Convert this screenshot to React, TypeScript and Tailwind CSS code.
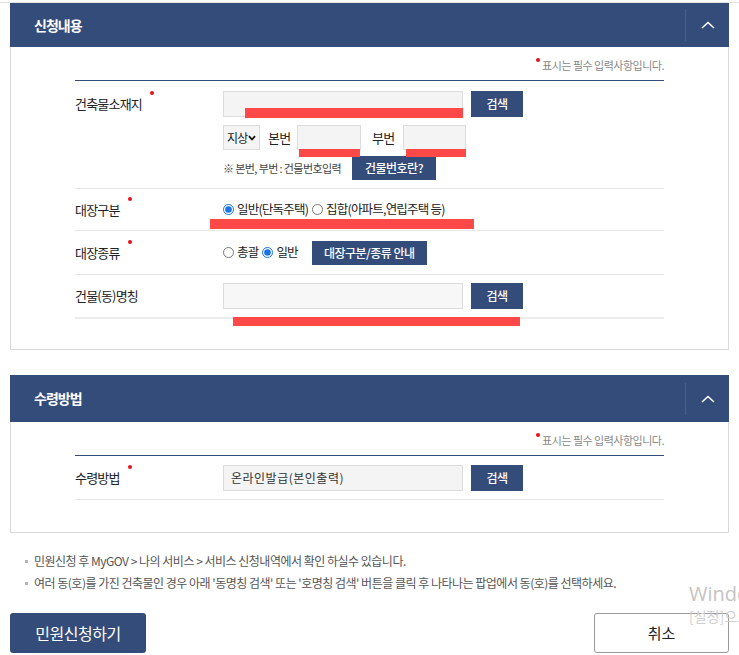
import { ReactNode } from 'react'

const NAVY = 'bg-[#344c79]'

function Req({ children }: { children: ReactNode }) {
  return (
    <span className="relative">
      {children}
      <span className="absolute -right-[12px] -top-[3px] w-[4px] h-[4px] rounded-full bg-[#e8101a]" />
    </span>
  )
}

function PanelHeader({ title, tall = false }: { title: string; tall?: boolean }) {
  return (
    <div className={`${NAVY} ${tall ? 'h-[47px]' : 'h-[44px]'} flex items-center justify-between`}>
      <h2 className="pl-6 text-[14px] font-bold text-white tracking-[-1px]">{title}</h2>
      <div className="h-[32px] w-[44px] border-l border-[#4a6089] flex items-center justify-center">
        <svg width="14" height="8" viewBox="0 0 14 8" fill="none">
          <path d="M1 7L7 1.5L13 7" stroke="white" strokeWidth="1.6" />
        </svg>
      </div>
    </div>
  )
}

function RequiredNote() {
  return (
    <div className="flex justify-end items-center h-[33px] pt-[3px] text-[11px] text-[#888] tracking-[-0.5px]">
      <span className="relative">
        <span className="absolute -left-[6px] top-[1px] w-[4px] h-[4px] rounded-full bg-[#e8101a]" />
        표시는 필수 입력사항입니다.
      </span>
    </div>
  )
}

function NavyBtn({ children, className = '' }: { children: ReactNode; className?: string }) {
  return (
    <button
      className={`${NAVY} text-white text-[12px] font-medium tracking-[-0.5px] flex items-center justify-center ${className}`}
    >
      {children}
    </button>
  )
}

function TextInput({ value = '', className = '' }: { value?: string; className?: string }) {
  return (
    <div
      className={`h-[26px] border border-[#dcdcdc] bg-[#f4f4f4] text-[12px] text-[#333] px-[7px] flex items-center tracking-[0.5px] ${className}`}
    >
      {value}
    </div>
  )
}

function Radio({ checked, label, name }: { checked: boolean; label: string; name: string }) {
  return (
    <label className="flex items-center gap-[3px]">
      <input
        type="radio"
        name={name}
        defaultChecked={checked}
        className="w-[11px] h-[11px] m-0 accent-[#1a73e8]"
      />
      <span>{label}</span>
    </label>
  )
}

const MARKS = [
  'left-[245px] top-[108px] w-[218px] h-[10px]',
  'left-[299px] top-[149px] w-[61px] h-[8px]',
  'left-[406px] top-[149px] w-[60px] h-[8px]',
  'left-[210px] top-[219px] w-[264px] h-[10px]',
  'left-[233px] top-[317px] w-[287px] h-[9px]',
]

export default function App() {
  return (
    <div
      className="relative w-[739px] h-[655px] overflow-hidden bg-white text-[#222]"
      style={{ fontFamily: '"Noto Sans CJK KR", "Noto Sans", sans-serif' }}
    >
      <div className="h-[3px] border-t border-[#e3e3e3] mt-[2px]" />

      {/* 신청내용 */}
      <section className="mx-[10px] -mt-[2px]">
        <PanelHeader title="신청내용" />
        <div className="border-x border-b border-[#d9d9d9] h-[303px] px-[64px]">
          <RequiredNote />
          <div className="border-t border-[#344c79]">
            {/* 건축물소재지 */}
            <div className="flex border-b border-[#e6e6e6] pt-[10px] pb-[8px] text-[13px] tracking-[-0.8px]">
              <div className="w-[148px] h-[26px] flex items-center">
                <Req>건축물소재지</Req>
              </div>
              <div className="flex flex-col">
                <div className="flex gap-[8px]">
                  <TextInput className="w-[240px]" />
                  <NavyBtn className="w-[52px] h-[26px]">검색</NavyBtn>
                </div>
                <div className="flex items-center mt-[8px] h-[25px]">
                  <div className="w-[37px] h-[25px] border border-[#dcdcdc] bg-[#f4f4f4] flex items-center pl-[3px] text-[12px]">
                    지상
                    <svg width="8" height="6" viewBox="0 0 8 6" className="ml-[1px]">
                      <path d="M1 1.2L4 4.5L7 1.2" stroke="#111" strokeWidth="1.8" fill="none" />
                    </svg>
                  </div>
                  <span className="ml-[8px] w-[29px]">본번</span>
                  <div className="w-[64px] h-[25px] border border-[#dcdcdc] bg-[#f4f4f4]" />
                  <span className="ml-[11px] w-[31px]">부번</span>
                  <div className="w-[63px] h-[25px] border border-[#dcdcdc] bg-[#f4f4f4]" />
                </div>
                <div className="flex items-center mt-[6px]">
                  <span className="text-[11px] text-[#444] w-[129px] tracking-[-0.6px]">
                    ※ 본번, 부번 : 건물번호입력
                  </span>
                  <NavyBtn className="w-[84px] h-[24px]">건물번호란?</NavyBtn>
                </div>
              </div>
            </div>

            {/* 대장구분 */}
            <div className="flex items-center h-[42px] border-b border-[#e6e6e6] text-[13px] tracking-[-0.8px]">
              <div className="w-[148px]">
                <Req>대장구분</Req>
              </div>
              <div className="flex items-center gap-[4px] text-[12.5px]">
                <Radio name="gubun" checked label="일반(단독주택)" />
                <Radio name="gubun" checked={false} label="집합(아파트,연립주택 등)" />
              </div>
            </div>

            {/* 대장종류 */}
            <div className="flex items-center h-[44px] border-b border-[#e6e6e6] text-[13px] tracking-[-0.8px]">
              <div className="w-[148px]">
                <Req>대장종류</Req>
              </div>
              <div className="flex items-center gap-[4px] text-[12.5px]">
                <Radio name="kind" checked={false} label="총괄" />
                <Radio name="kind" checked label="일반" />
                <NavyBtn className="ml-[10px] w-[115px] h-[24px]">대장구분/종류 안내</NavyBtn>
              </div>
            </div>

            {/* 건물(동)명칭 */}
            <div className="flex items-center h-[44px] border-b-2 border-[#ececec] text-[13px] tracking-[-0.8px]">
              <div className="w-[148px]">건물(동)명칭</div>
              <div className="flex gap-[8px]">
                <TextInput className="w-[240px] !bg-[#f7f7f7]" />
                <NavyBtn className="w-[52px] h-[26px]">검색</NavyBtn>
              </div>
            </div>
          </div>
        </div>
      </section>

      {/* 수령방법 */}
      <section className="mx-[10px] mt-[25px]">
        <PanelHeader title="수령방법" tall />
        <div className="border-x border-b border-[#d9d9d9] h-[111px] px-[64px]">
          <RequiredNote />
          <div className="border-t border-[#344c79]">
            <div className="flex items-center h-[44px] border-b border-[#e6e6e6] text-[13px] tracking-[-0.8px]">
              <div className="w-[148px]">
                <Req>수령방법</Req>
              </div>
              <div className="flex gap-[8px]">
                <TextInput className="w-[240px]" value="온라인발급(본인출력)" />
                <NavyBtn className="w-[52px] h-[26px]">검색</NavyBtn>
              </div>
            </div>
          </div>
        </div>
      </section>

      {/* 안내 */}
      <ul className="mt-[20px] ml-[25px] text-[12px] text-[#555] tracking-[-0.5px] flex flex-col gap-[6px]">
        <li className="flex items-center gap-[6px] h-[16px]">
          <span className="w-[3px] h-[3px] bg-[#b5b5b5]" />
          민원신청 후 MyGOV &gt; 나의 서비스 &gt; 서비스 신청내역에서 확인 하실수 있습니다.
        </li>
        <li className="flex items-center gap-[6px] h-[16px]">
          <span className="w-[3px] h-[3px] bg-[#b5b5b5]" />
          여러 동(호)를 가진 건축물인 경우 아래 '동명칭 검색' 또는 '호명칭 검색' 버튼을 클릭 후 나타나는 팝업에서 동(호)를 선택하세요.
        </li>
      </ul>

      <div className="flex justify-between mx-[10px] mt-[22px]">
        <button className={`${NAVY} w-[136px] h-[40px] rounded-[3px] text-white text-[16px] tracking-[-0.5px]`}>
          민원신청하기
        </button>
        <button className="w-[135px] h-[40px] rounded-[3px] border border-[#9a9a9a] bg-white text-[15px] text-[#222]">
          취소
        </button>
      </div>

      {/* red annotation marks */}
      {MARKS.map((m) => (
        <div key={m} className={`absolute ${m} bg-[#ff4848]`} />
      ))}

      {/* windows activation watermark */}
      <div className="absolute left-[689px] top-[583px] text-[#c4c4c4] whitespace-nowrap pointer-events-none flex flex-col gap-[2px]">
        <div className="text-[20px] leading-[22px]" style={{ fontFamily: '"Open Sans", sans-serif' }}>Windows 정품 인증</div>
        <div className="text-[14px] leading-[18px] text-[#cfcfcf]">[설정]으로 이동하여</div>
      </div>
    </div>
  )
}
